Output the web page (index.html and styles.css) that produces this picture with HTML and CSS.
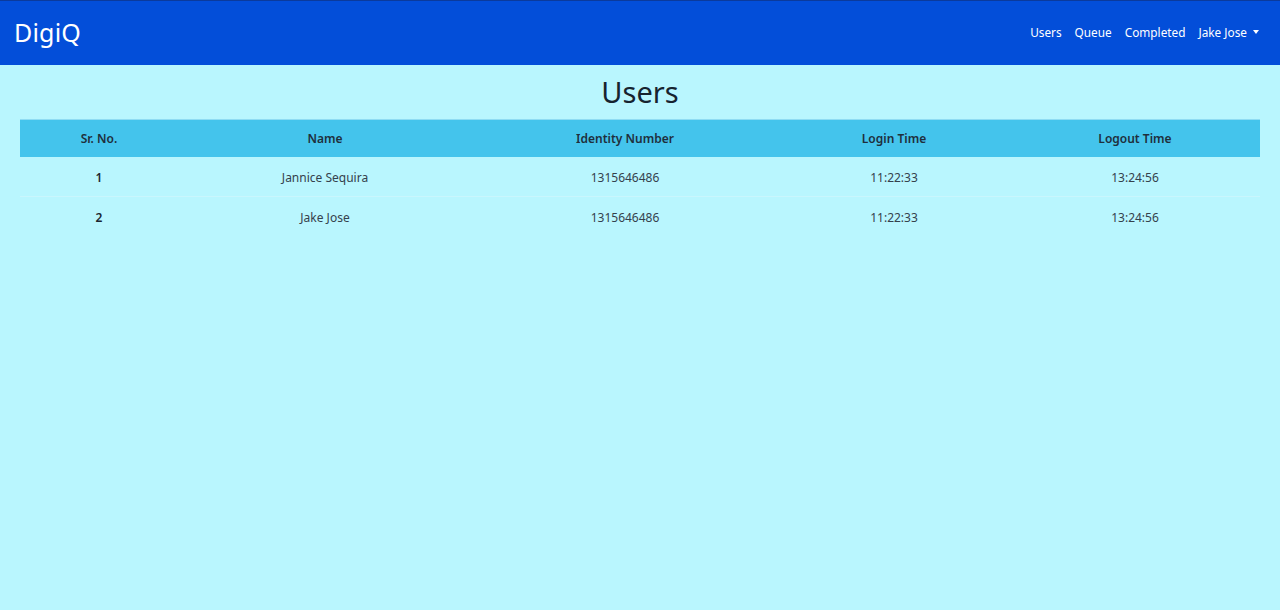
FILE: index.html
```html
<!DOCTYPE html>
<html lang="en">
<head>
<meta charset="utf-8">
<title>DigiQ - Users</title>
<link rel="stylesheet" href="styles.css">
</head>
<body>
<nav class="navbar">
  <a class="brand" href="#">DigiQ</a>
  <ul class="nav-links">
    <li><a href="#">Users</a></li>
    <li><a href="#">Queue</a></li>
    <li><a href="#">Completed</a></li>
    <li><a href="#" class="dropdown">Jake Jose</a></li>
  </ul>
</nav>
<main class="content">
  <h1 class="title">Users</h1>
  <table class="users-table">
    <colgroup>
      <col class="c1"><col class="c2"><col class="c3"><col class="c4"><col class="c5">
    </colgroup>
    <thead>
      <tr><th>Sr. No.</th><th>Name</th><th>Identity Number</th><th>Login Time</th><th>Logout Time</th></tr>
    </thead>
    <tbody>
      <tr><th>1</th><td>Jannice Sequira</td><td>1315646486</td><td>11:22:33</td><td>13:24:56</td></tr>
      <tr><th>2</th><td>Jake Jose</td><td>1315646486</td><td>11:22:33</td><td>13:24:56</td></tr>
    </tbody>
  </table>
</main>
</body>
</html>
```
FILE: styles.css
```css
html, body {
  margin: 0;
  padding: 0;
  height: 100%;
}
body {
  background: #b9f6fe;
  font-family: "Noto Sans", "Open Sans", sans-serif;
  color: #212529;
}
.navbar {
  height: 65px;
  box-sizing: border-box;
  background: #034ed9;
  border-top: 1px solid #0b3a9c;
  display: flex;
  align-items: center;
  justify-content: space-between;
  padding: 0 21px 0 14px;
}
.brand {
  color: #fff;
  text-decoration: none;
  font-size: 25px;
  letter-spacing: 0.2px;
  margin-bottom: 2px;
}
.nav-links {
  list-style: none;
  margin: 0 0 5px;
  padding: 0;
  display: flex;
  gap: 13px;
}
.nav-links a {
  color: #fff;
  text-decoration: none;
  font-size: 11.8px;
}
.dropdown::after {
  content: "";
  display: inline-block;
  margin-left: 6px;
  vertical-align: 3px;
  border-top: 4px solid #fff;
  border-left: 3.5px solid transparent;
  border-right: 3.5px solid transparent;
}
.content {
  padding: 0 20px;
}
.title {
  margin: 0;
  padding-top: 9px;
  height: 45px;
  box-sizing: content-box;
  text-align: center;
  font-weight: 400;
  font-size: 29px;
  line-height: 36px;
  color: #16232f;
}
.users-table {
  width: 100%;
  border-collapse: collapse;
  table-layout: fixed;
  font-size: 12px;
}
.c1 { width: 158px; }
.c2 { width: 294px; }
.c3 { width: 306px; }
.c4 { width: 232px; }
.c5 { width: 250px; }
.users-table thead th {
  background: #44c4ec;
  height: 37px;
  padding: 0;
  font-weight: 600;
  color: #1f2f3c;
  text-align: center;
  border-top: 1px solid #8fdcf3;
}
.users-table tbody th,
.users-table tbody td {
  height: 37px;
  padding: 2px 0 0;
  text-align: center;
  color: #35414c;
  border-bottom: 1px solid #c9f6fd;
}
.users-table tbody th {
  font-weight: 600;
  color: #1b2530;
}
.users-table tbody tr:last-child th,
.users-table tbody tr:last-child td {
  border-bottom: none;
}
```
